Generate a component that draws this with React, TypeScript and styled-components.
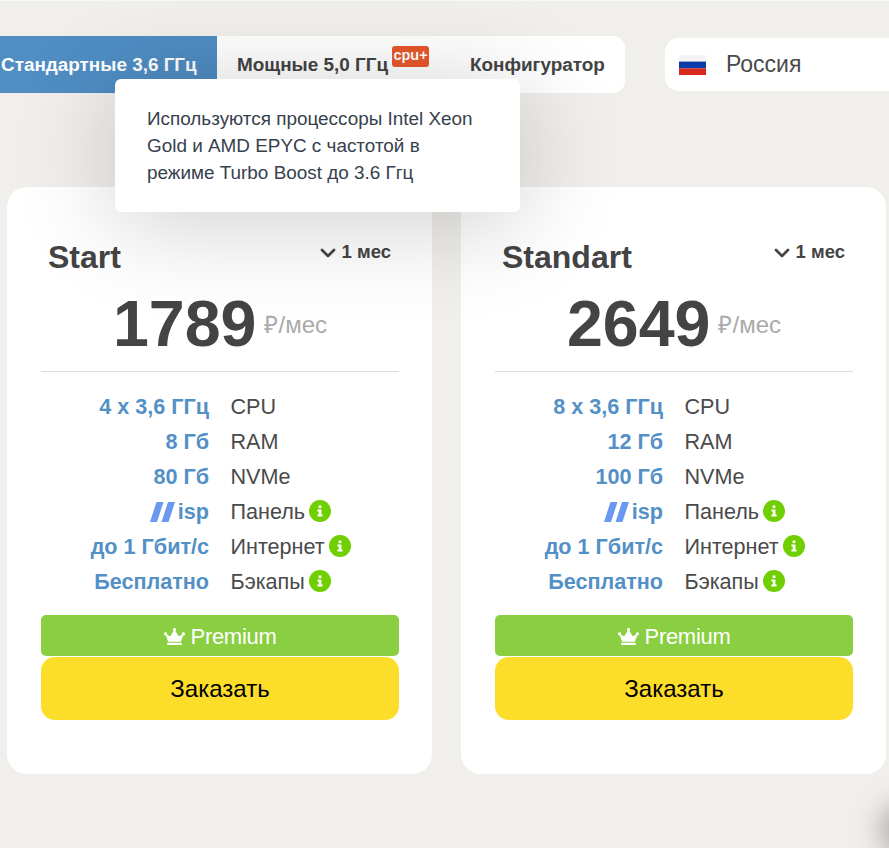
import styled, { createGlobalStyle } from "styled-components";
import { ChevronDown } from "lucide-react";
import { FaCrown } from "react-icons/fa";

interface Spec {
  value: string;
  label: string;
  info?: boolean;
  isp?: boolean;
}

interface Plan {
  name: string;
  price: number;
  specs: Spec[];
}

const makeSpecs = (cpu: string, ram: string, disk: string): Spec[] => [
  { value: cpu, label: "CPU" },
  { value: ram, label: "RAM" },
  { value: disk, label: "NVMe" },
  { value: "isp", label: "Панель", info: true, isp: true },
  { value: "до 1 Гбит/с", label: "Интернет", info: true },
  { value: "Бесплатно", label: "Бэкапы", info: true },
];

const plans: Plan[] = [
  { name: "Start", price: 1789, specs: makeSpecs("4 x 3,6 ГГц", "8 Гб", "80 Гб") },
  { name: "Standart", price: 2649, specs: makeSpecs("8 x 3,6 ГГц", "12 Гб", "100 Гб") },
];

const InfoIcon = () => (
  <InfoSvg viewBox="0 0 22 22">
    <circle cx="11" cy="11" r="11" fill="#6fcf00" />
    <rect x="9.6" y="5.5" width="2.8" height="2.6" fill="#fff" />
    <path d="M8.4 9.5h4v5h1.2v2H8.4v-2h1.4v-3H8.4z" fill="#fff" />
  </InfoSvg>
);

const IspLogo = () => (
  <svg width="25" height="20" viewBox="0 0 25 20">
    <path d="M6.5 0H13.5L7 20H0z" fill="#6b98f0" />
    <path d="M18 0H25L18.5 20H11.5z" fill="#6b98f0" />
  </svg>
);

const RussianFlag = () => (
  <FlagSvg viewBox="0 0 27 20">
    <rect width="27" height="6.6" fill="#f4f4f4" />
    <rect y="6.6" width="27" height="6.8" fill="#0a3ca8" />
    <rect y="13.4" width="27" height="6.6" fill="#d8291c" />
  </FlagSvg>
);

const PlanCard = ({ plan }: { plan: Plan }) => (
  <Card>
    <CardHead>
      <PlanName>{plan.name}</PlanName>
      <Period>
        <ChevronDown size={24} strokeWidth={2.7} />1 мес
      </Period>
    </CardHead>
    <PriceRow>
      <Price>{plan.price}</Price>
      <PriceUnit>₽/мес</PriceUnit>
    </PriceRow>
    <SpecList>
      {plan.specs.map((spec) => (
        <SpecRow key={spec.label}>
          <SpecValue>
            {spec.isp && <IspLogo />}
            {spec.value}
          </SpecValue>
          <SpecLabel>
            {spec.label}
            {spec.info && <InfoIcon />}
          </SpecLabel>
        </SpecRow>
      ))}
    </SpecList>
    <PremiumBar>
      <FaCrown size={21} />
      Premium
    </PremiumBar>
    <OrderButton>Заказать</OrderButton>
  </Card>
);

const App = () => (
  <Page>
    <GlobalStyle />
    <TopRow>
      <Tabs>
        <ActiveTab>Стандартные 3,6 ГГц</ActiveTab>
        <Tab>
          Мощные 5,0 ГГц
          <Badge>cpu+</Badge>
        </Tab>
        <LastTab>Конфигуратор</LastTab>
      </Tabs>
      <Country>
        <RussianFlag />
        Россия
      </Country>
    </TopRow>
    <Tooltip>
      Используются процессоры Intel Xeon Gold и AMD EPYC с частотой в режиме Turbo Boost до 3.6 Ггц
    </Tooltip>
    <Cards>
      {plans.map((plan) => (
        <PlanCard key={plan.name} plan={plan} />
      ))}
    </Cards>
    <ChatGlow />
  </Page>
);

const GlobalStyle = createGlobalStyle`
  html, body {
    margin: 0;
    padding: 0;
    background: #f0efeb;
  }
  * {
    box-sizing: border-box;
  }
`;

const Page = styled.div`
  position: relative;
  width: 889px;
  height: 848px;
  overflow: hidden;
  padding-top: 35px;
  border-top: 1px solid #f7f7f5;
  background: #f0efeb;
  font-family: "Liberation Sans", Arial, sans-serif;
  color: #444;
`;

const TopRow = styled.div`
  display: flex;
  align-items: center;
  gap: 40px;
`;

const Tabs = styled.div`
  display: flex;
  width: 625px;
  height: 57px;
  flex-shrink: 0;
  background: #fff;
  border-radius: 0 12px 12px 0;
  font-size: 18.9px;
  font-weight: 700;
`;

const ActiveTab = styled.div`
  display: flex;
  align-items: center;
  width: 217px;
  padding-left: 1px;
  background: #4f8dc3;
  color: #fff;
  white-space: nowrap;
`;

const Tab = styled.div`
  display: flex;
  align-items: center;
  position: relative;
  padding-left: 20px;
  width: 233px;
  white-space: nowrap;
`;

const LastTab = styled(Tab)`
  width: 175px;
`;

const Badge = styled.span`
  position: absolute;
  left: 175px;
  top: 10px;
  width: 37px;
  height: 21px;
  padding-top: 1px;
  border-radius: 3px;
  background: #e8582c;
  color: #fff;
  font-size: 14.5px;
  line-height: 17px;
  text-align: center;
`;

const Country = styled.div`
  display: flex;
  align-items: center;
  gap: 20px;
  width: 300px;
  height: 53px;
  flex-shrink: 0;
  padding: 0 0 1px 14px;
  background: #fff;
  border-radius: 14px;
  font-size: 23px;
  color: #4a4a4a;
`;

const FlagSvg = styled.svg`
  width: 27px;
  height: 20px;
  margin-top: 1px;
`;

const Tooltip = styled.div`
  position: absolute;
  left: 115px;
  top: 78px;
  z-index: 5;
  width: 405px;
  height: 133px;
  padding: 25.5px 32px;
  background: #fff;
  border-radius: 6px;
  box-shadow: 0 10px 100px rgba(0, 0, 0, 0.2);
  color: #36414d;
  font-size: 18.9px;
  line-height: 27px;
`;

const Cards = styled.div`
  display: flex;
  gap: 29px;
  margin-top: 94px;
  padding-left: 7px;
`;

const Card = styled.div`
  width: 425px;
  height: 587px;
  padding: 0 33px 0 34px;
  background: #fff;
  border-radius: 20px;
`;

const CardHead = styled.div`
  display: flex;
  justify-content: space-between;
  padding: 50px 8px 0 7px;
  height: 86px;
`;

const PlanName = styled.div`
  font-size: 32px;
  font-weight: 700;
  line-height: 40px;
`;

const Period = styled.div`
  display: flex;
  align-items: center;
  height: 30px;
  font-size: 18.5px;
  font-weight: 700;
  color: #444;

  svg {
    margin: 2px 2px 0 0;
  }
`;

const PriceRow = styled.div`
  display: flex;
  align-items: center;
  justify-content: center;
  gap: 8px;
  height: 99px;
  padding-top: 3px;
  padding-bottom: 0;
  border-bottom: 1px solid #dedede;
`;

const Price = styled.span`
  font-size: 64.5px;
  font-weight: 700;
  line-height: 74px;
`;

const PriceUnit = styled.span`
  font-size: 24px;
  color: #aaa;
`;

const SpecList = styled.div`
  display: flex;
  flex-direction: column;
  padding-top: 17px;
`;

const SpecRow = styled.div`
  display: grid;
  grid-template-columns: 168px 1fr;
  column-gap: 21.5px;
  height: 35px;
  align-items: center;
  font-size: 21.6px;
`;

const SpecValue = styled.div`
  display: flex;
  align-items: center;
  justify-content: flex-end;
  gap: 3px;
  font-weight: 700;
  color: #5390c6;
  white-space: nowrap;
`;

const SpecLabel = styled.div`
  display: flex;
  align-items: center;
  gap: 4px;
  color: #4a4a4a;
`;

const InfoSvg = styled.svg`
  width: 22px;
  height: 22px;
  margin-top: -2px;
`;

const PremiumBar = styled.div`
  display: flex;
  align-items: center;
  justify-content: center;
  gap: 6px;
  height: 41px;
  padding-top: 2px;
  margin-top: 16px;
  background: #8acf42;
  border-radius: 5px;
  color: #fff;
  font-size: 22px;
  letter-spacing: -0.3px;
`;

const OrderButton = styled.div`
  display: flex;
  align-items: center;
  justify-content: center;
  height: 63px;
  margin-top: 1px;
  background: #fcdd2a;
  border-radius: 14px;
  color: #000;
  font-size: 24px;
`;

const ChatGlow = styled.div`
  position: absolute;
  right: -40px;
  bottom: -2px;
  width: 40px;
  height: 40px;
  border-radius: 50%;
  box-shadow: 0 0 30px 6px rgba(0, 0, 0, 0.35);
`;

export default App;
